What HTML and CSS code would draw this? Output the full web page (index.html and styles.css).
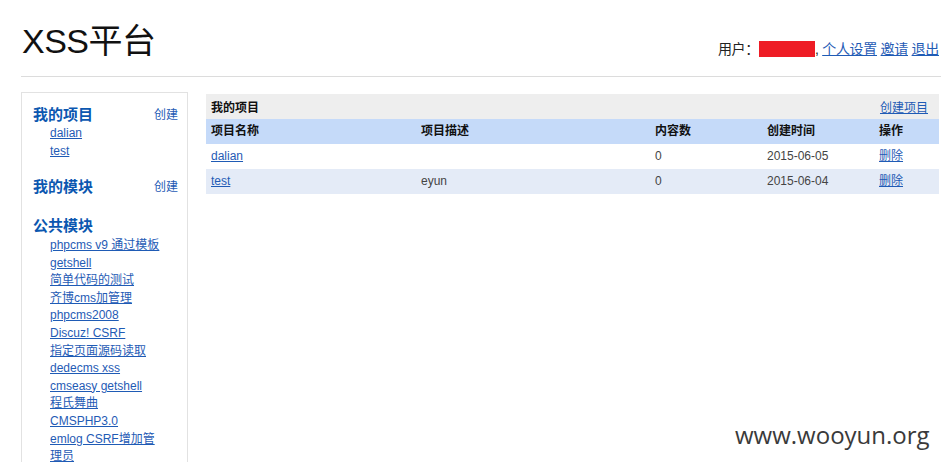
FILE: index.html
```html
<!DOCTYPE html>
<html lang="zh-CN">
<head>
<meta charset="utf-8">
<title>XSS平台</title>
<link rel="stylesheet" href="styles.css">
</head>
<body>
<div class="page">
  <header class="header">
    <h1 class="title">XSS平台</h1>
    <div class="user">用户：<span class="redact"></span>, <a href="#">个人设置</a> <a href="#">邀请</a> <a href="#">退出</a></div>
  </header>
  <div class="main">
    <aside class="sidebar">
      <section class="sec sec-projects">
        <div class="sec-head"><span class="sec-title">我的项目</span><a class="create" href="#">创建</a></div>
        <ul class="links links-first">
          <li><a href="#">dalian</a></li>
          <li><a href="#">test</a></li>
        </ul>
      </section>
      <section class="sec sec-modules">
        <div class="sec-head"><span class="sec-title">我的模块</span><a class="create" href="#">创建</a></div>
      </section>
      <section class="sec sec-public">
        <div class="sec-head"><span class="sec-title">公共模块</span></div>
        <ul class="links links-public">
          <li><a href="#">phpcms v9 通过模板</a></li>
          <li><a href="#">getshell</a></li>
          <li><a href="#">简单代码的测试</a></li>
          <li><a href="#">齐博cms加管理</a></li>
          <li><a href="#">phpcms2008</a></li>
          <li><a href="#">Discuz! CSRF</a></li>
          <li><a href="#">指定页面源码读取</a></li>
          <li><a href="#">dedecms xss</a></li>
          <li><a href="#">cmseasy getshell</a></li>
          <li><a href="#">程氏舞曲</a></li>
          <li><a href="#">CMSPHP3.0</a></li>
          <li><a href="#">emlog CSRF增加管</a></li>
          <li><a href="#">理员</a></li>
        </ul>
      </section>
    </aside>
    <div class="content">
      <div class="box-head"><span class="box-title">我的项目</span><a href="#">创建项目</a></div>
      <table class="grid">
        <colgroup>
          <col class="c1"><col class="c2"><col class="c3"><col class="c4"><col class="c5">
        </colgroup>
        <thead>
          <tr><th>项目名称</th><th>项目描述</th><th>内容数</th><th>创建时间</th><th>操作</th></tr>
        </thead>
        <tbody>
          <tr><td><a href="#">dalian</a></td><td></td><td>0</td><td>2015-06-05</td><td><a href="#">删除</a></td></tr>
          <tr class="alt"><td><a href="#">test</a></td><td>eyun</td><td>0</td><td>2015-06-04</td><td><a href="#">删除</a></td></tr>
        </tbody>
      </table>
    </div>
  </div>
</div>
<div class="watermark">www.wooyun.org</div>
</body>
</html>
```

FILE: styles.css
```css
html, body {
  margin: 0;
  padding: 0;
  background: #fff;
  height: 100%;
  overflow: hidden;
}
body {
  font-family: "Liberation Sans", Arial, "Noto Sans CJK SC", sans-serif;
  font-size: 12px;
  color: #333;
  position: relative;
}
a { color: #1f5bb5; }
.page {
  padding: 0 2px 0 21px;
}
.header {
  display: flex;
  justify-content: space-between;
  align-items: flex-end;
  height: 77px;
  border-bottom: 1px solid #dcdcdc;
  margin-right: -2px;
  padding-right: 2px;
  box-sizing: border-box;
}
.title {
  margin: 0 0 auto 1px;
  padding-top: 21px;
  font-weight: normal;
  font-size: 34px;
  line-height: 40px;
  color: #111;
  letter-spacing: -0.5px;
}
.user {
  font-size: 14px;
  line-height: 18px;
  color: #222;
  margin-bottom: 18px;
  letter-spacing: -0.3px;
}
.user a { color: #1f5bb5; }
.redact {
  display: inline-block;
  width: 56px;
  height: 16px;
  background: #ee1c25;
  vertical-align: -3px;
}
.main {
  display: flex;
  align-items: flex-start;
  margin-top: 15px;
}
.sidebar {
  width: 167px;
  box-sizing: border-box;
  border: 1px solid #e2e2e2;
  border-bottom: none;
  padding: 10px 9px 40px 11px;
  margin-right: 18px;
  flex: none;
}
.sec-head {
  display: flex;
  justify-content: space-between;
  align-items: center;
  height: 20px;
}
.sec-title {
  font-size: 15px;
  font-weight: bold;
  color: #0b57b0;
  font-family: "Noto Sans CJK SC", sans-serif;
}
.create {
  text-decoration: none;
  font-size: 12px;
  color: #1f5bb5;
}
.links {
  list-style: none;
  margin: 0;
  padding: 0 0 0 17px;
}
.links-first { margin-top: 2px; }
.links-public { margin-top: 2px; }
.links li {
  line-height: 17.6px;
  font-size: 12px;
}
.sec-projects { margin-bottom: 15.8px; }
.sec-modules { margin-bottom: 19px; }
.content {
  width: 733px;
  margin-top: 2px;
}
.box-head {
  display: flex;
  justify-content: space-between;
  align-items: center;
  height: 25px;
  background: #eeeeee;
  padding: 0 11px 0 5px;
}
.box-title {
  font-weight: bold;
  color: #111;
}
.grid {
  width: 100%;
  border-collapse: collapse;
  table-layout: fixed;
}
.c1 { width: 210px; }
.c2 { width: 234px; }
.c3 { width: 112px; }
.c4 { width: 112px; }
.c5 { width: 65px; }
.grid th, .grid td {
  height: 25px;
  padding: 0 0 0 5px;
  text-align: left;
  font-size: 12px;
  line-height: 25px;
}
.grid th {
  background: #c5daf9;
  color: #111;
  font-weight: bold;
}
.grid td { color: #444; }
.grid tr.alt td { background: #e4ebf7; }
.watermark {
  position: absolute;
  left: 735px;
  top: 418px;
  font-family: "Open Sans", sans-serif;
  font-size: 24px;
  color: #3a3a3a;
}
```
